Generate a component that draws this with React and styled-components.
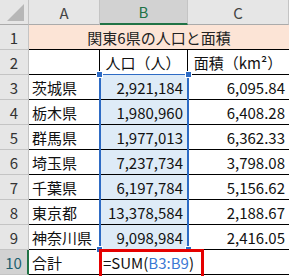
import React from 'react';
import styled, { createGlobalStyle } from 'styled-components';

const colors = {
  header: '#e6e6e6',
  headerActive: '#d2d2d2',
  headerLine: '#c4c4c4',
  green: '#217346',
  peach: '#fce4d6',
  pick: '#deebf7',
  blue: '#2e6bc4',
  ref: '#3a78d4',
  red: '#e50000',
  text: '#111',
};

const GlobalStyle = createGlobalStyle`
  body {
    margin: 0;
    background: #fff;
    font-family: "Noto Sans CJK JP", "Noto Sans", sans-serif;
  }
`;

const rows = [
  ['茨城県', '2,921,184', '6,095.84'],
  ['栃木県', '1,980,960', '6,408.28'],
  ['群馬県', '1,977,013', '6,362.33'],
  ['埼玉県', '7,237,734', '3,798.08'],
  ['千葉県', '6,197,784', '5,156.62'],
  ['東京都', '13,378,584', '2,188.67'],
  ['神奈川県', '9,098,984', '2,416.05'],
];

function App() {
  return (
    <>
      <GlobalStyle />
      <Sheet>
        <Corner>
          <Triangle />
        </Corner>
        <ColHead>A</ColHead>
        <ColHead $active>B</ColHead>
        <ColHead>C</ColHead>

        <RowHead>1</RowHead>
        <Title>関東6県の人口と面積</Title>

        <RowHead>2</RowHead>
        <Cell />
        <Cell $align="center">人口（人）</Cell>
        <Cell $align="center" $last>面積（km²）</Cell>

        {rows.map(([name, pop, area], i) => (
          <React.Fragment key={name}>
            <RowHead>{i + 3}</RowHead>
            <Cell>{name}</Cell>
            <Cell $align="right" $fill={colors.pick}>{pop}</Cell>
            <Cell $align="right" $last>{area}</Cell>
          </React.Fragment>
        ))}

        <RowHead $active>10</RowHead>
        <Cell>合計</Cell>
        <Cell $open>
          =SUM(<Ref>B3:B9</Ref>)
        </Cell>
        <Cell $last />

        <Selection>
          <Handle $x="left" $y="top" />
          <Handle $x="right" $y="top" />
          <Handle $x="left" $y="bottom" />
          <Handle $x="right" $y="bottom" />
        </Selection>
        <Highlight />
      </Sheet>
    </>
  );
}

const Sheet = styled.div`
  position: relative;
  width: 289px;
  height: 276px;
  overflow: hidden;
  display: grid;
  grid-template-columns: 29px 71px 88px 101px;
  grid-auto-rows: 25px;
  font-size: 15px;
  color: ${colors.text};
`;

const Corner = styled.div`
  position: relative;
  background: ${colors.header};
  border-right: 1px solid ${colors.headerLine};
  border-bottom: 1px solid #ababab;
`;

const Triangle = styled.div`
  position: absolute;
  right: 4px;
  bottom: 3px;
  width: 0;
  height: 0;
  border-left: 17px solid transparent;
  border-bottom: 17px solid #b7b7b7;
`;

const ColHead = styled.div`
  display: flex;
  align-items: center;
  justify-content: center;
  background: ${p => (p.$active ? colors.headerActive : colors.header)};
  color: ${p => (p.$active ? colors.green : '#444')};
  border-right: 1px solid ${colors.headerLine};
  border-bottom: ${p => (p.$active ? `2px solid ${colors.green}` : '1px solid #ababab')};
`;

const RowHead = styled.div`
  display: flex;
  align-items: center;
  justify-content: center;
  background: ${p => (p.$active ? colors.headerActive : colors.header)};
  color: ${p => (p.$active ? '#1d5f6e' : '#333')};
  border-right: ${p => (p.$active ? `2px solid ${colors.green}` : `1px solid ${colors.headerLine}`)};
  border-bottom: 1px solid ${colors.headerLine};
`;

const Title = styled.div`
  grid-column: span 3;
  display: flex;
  align-items: center;
  justify-content: center;
  background: ${colors.peach};
  border-bottom: 1px solid #000;
  color: #222;
`;

const Cell = styled.div`
  display: flex;
  align-items: center;
  justify-content: ${p => ({ left: 'flex-start', center: 'center', right: 'flex-end' }[p.$align || 'left'])};
  padding: 0 4px 0 3px;
  white-space: nowrap;
  background: ${p => p.$fill || '#fff'};
  border-bottom: 1px solid #000;
  border-right: ${p => (p.$last || p.$open ? 'none' : '1px solid #000')};
  overflow: ${p => (p.$open ? 'visible' : 'hidden')};
  position: relative;
  z-index: ${p => (p.$open ? 1 : 0)};
`;

const Ref = styled.span`
  color: ${colors.ref};
`;

const Selection = styled.div`
  position: absolute;
  left: 99px;
  top: 74px;
  width: 90px;
  height: 176px;
  box-sizing: border-box;
  border: 2px solid ${colors.blue};
  border-top-width: 1px;
  border-bottom-width: 1px;
  pointer-events: none;
`;

const Handle = styled.div`
  position: absolute;
  width: 5px;
  height: 5px;
  background: ${colors.blue};
  border: 1px solid #fff;
  ${p => (p.$x === 'left' ? 'left: -5px;' : 'right: -5px;')}
  ${p => (p.$y === 'top' ? 'top: -4px;' : 'bottom: -4px;')}
`;

const Highlight = styled.div`
  position: absolute;
  left: 99px;
  top: 249px;
  width: 105px;
  height: 30px;
  box-sizing: border-box;
  border: 3px solid ${colors.red};
  z-index: 2;
`;

export default App;
